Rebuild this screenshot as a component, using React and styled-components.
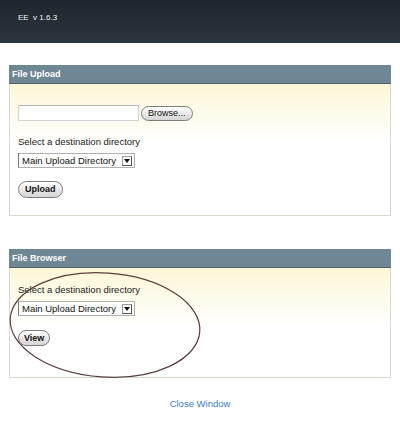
import React from "react";
import styled, { createGlobalStyle } from "styled-components";

const GlobalStyle = createGlobalStyle`
  html, body {
    margin: 0;
    padding: 0;
    background: #ffffff;
    font-family: "Liberation Sans", Arial, sans-serif;
  }
`;

const TopBar = styled.div`
  height: 43px;
  background: linear-gradient(#1e252b, #2c3640);
  display: flex;
  align-items: flex-start;
  padding: 13px 0 0 18px;
  box-sizing: border-box;
`;

const Version = styled.span`
  color: #f0f3f5;
  font-size: 8px;
  line-height: 10px;
  white-space: pre;
`;

const Main = styled.div`
  padding: 0 9px;
  display: flex;
  flex-direction: column;
`;

const Panel = styled.section`
  margin-top: ${(p) => p.$gap}px;
  position: relative;
`;

const PanelHead = styled.div`
  height: 18px;
  background: #6f8795;
  border-bottom: 1px solid #4f606b;
  color: #ffffff;
  font-size: 9px;
  font-weight: bold;
  line-height: 18px;
  padding-left: 3px;
`;

const PanelBody = styled.div`
  position: relative;
  border: 1px solid #d9d9cf;
  border-top: none;
  background: linear-gradient(#fdf6d6 0px, #fefbea 28px, #ffffff 60px);
  padding: ${(p) => p.$pad};
  display: flex;
  flex-direction: column;
  align-items: flex-start;
`;

const Row = styled.div`
  display: flex;
  align-items: center;
  gap: 2px;
`;

const FileInput = styled.div`
  width: 121px;
  height: 16px;
  box-sizing: border-box;
  background: #ffffff;
  border: 1px solid #d4d4d4;
  border-top-color: #b8b8b8;
`;

const Label = styled.div`
  margin-top: ${(p) => p.$top}px;
  font-size: 9.5px;
  line-height: 14px;
  color: #222;
`;

const Select = styled.div`
  margin-top: 4px;
  height: 15px;
  box-sizing: border-box;
  display: flex;
  align-items: center;
  background: #ffffff;
  border: 1px solid #b0b0b0;
  border-left-color: #7a7a7a;
  padding-left: 3px;
  font-size: 9.5px;
  color: #111;
`;

const SelectText = styled.span`
  margin-right: 6px;
`;

const Arrow = styled.span`
  width: 10px;
  height: 10px;
  margin-right: 2px;
  box-sizing: border-box;
  border: 1px solid #9a9a9a;
  border-right-color: #555;
  border-bottom-color: #555;
  display: flex;
  align-items: center;
  justify-content: center;
  &::after {
    content: "";
    border-left: 3px solid transparent;
    border-right: 3px solid transparent;
    border-top: 4px solid #111;
  }
`;

const Pill = styled.button`
  margin-top: ${(p) => p.$top || 0}px;
  height: ${(p) => p.$h || 16}px;
  padding: 0 ${(p) => p.$px || 6}px;
  border: 1px solid #7d7d7d;
  border-radius: 9px;
  background: linear-gradient(#ffffff, #e4e4e4 60%, #d6d6d6);
  box-shadow: inset 0 1px 0 #fff;
  font-family: "Liberation Sans", Arial, sans-serif;
  font-size: 9px;
  font-weight: ${(p) => (p.$bold ? "bold" : "normal")};
  color: #111;
  line-height: 1;
  cursor: pointer;
`;

const Circle = styled.svg`
  position: absolute;
  left: 0;
  top: 0;
  overflow: visible;
  pointer-events: none;
`;

const Footer = styled.div`
  margin-top: 19px;
  text-align: center;
  font-size: 9.5px;
  line-height: 14px;
`;

const Link = styled.a`
  color: #3b7bc2;
  text-decoration: none;
`;

const DirSelect = () => (
  <Select>
    <SelectText>Main Upload Directory</SelectText>
    <Arrow />
  </Select>
);

export default function App() {
  return (
    <>
      <GlobalStyle />
      <TopBar>
        <Version>EE  v 1.6.3</Version>
      </TopBar>
      <Main>
        <Panel $gap={22}>
          <PanelHead>File Upload</PanelHead>
          <PanelBody $pad="21px 8px 17px">
            <Row>
              <FileInput />
              <Pill $h={15} $px={6}>Browse...</Pill>
            </Row>
            <Label $top={14}>Select a destination directory</Label>
            <DirSelect />
            <Pill $top={13} $h={17} $px={6} $bold>Upload</Pill>
          </PanelBody>
        </Panel>
        <Panel $gap={33}>
          <PanelHead>File Browser</PanelHead>
          <PanelBody $pad="15px 8px 31px">
            <Label $top={0}>Select a destination directory</Label>
            <DirSelect />
            <Pill $top={14} $h={16} $px={5} $bold>View</Pill>
            <Circle width="200" height="110">
              <ellipse
                cx="95"
                cy="57"
                rx="95"
                ry="52"
                transform="rotate(4 95 57)"
                fill="none"
                stroke="#5b3f40"
                strokeWidth="1.2"
              />
            </Circle>
          </PanelBody>
        </Panel>
        <Footer>
          <Link href="#">Close Window</Link>
        </Footer>
      </Main>
    </>
  );
}
